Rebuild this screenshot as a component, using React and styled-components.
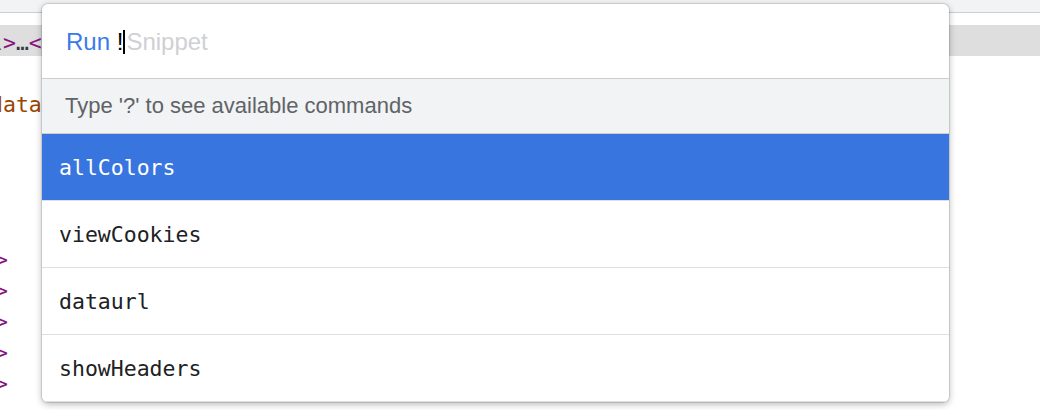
import React from "react";
import styled, { createGlobalStyle } from "styled-components";

const GlobalStyle = createGlobalStyle`
  html, body {
    margin: 0;
    padding: 0;
    background: #fff;
    overflow: hidden;
  }
  body {
    font-family: "Liberation Sans", Arial, sans-serif;
  }
`;

const Page = styled.div`
  position: relative;
  width: 1040px;
  height: 410px;
  overflow: hidden;
  background: #fff;
`;

const TopStrip = styled.div`
  height: 12px;
  background: #f1f3f4;
  border-bottom: 1px solid #cbcdd1;
`;

const CodeArea = styled.div`
  padding-top: 12px;
  font-family: "DejaVu Sans Mono", "Liberation Mono", monospace;
  font-size: 21.5px;
`;

const CodeLine = styled.div`
  box-sizing: border-box;
  height: 31px;
  padding-top: 5px;
  line-height: 26px;
  white-space: pre;
  overflow: hidden;
  text-indent: ${(p) => p.$indent || 0}px;
  background: ${(p) => (p.$selected ? "#dedede" : "transparent")};
`;

const Tag = styled.span`
  color: #881280;
`;

const Attr = styled.span`
  color: #994500;
`;

const Ellipsis = styled.span`
  color: #303942;
`;

const Dialog = styled.div`
  position: absolute;
  top: 4px;
  left: 42px;
  width: 907px;
  background: #fff;
  border-radius: 6px;
  overflow: hidden;
  box-shadow: 0 0 0 1px rgba(0, 0, 0, 0.1), 0 2px 7px rgba(0, 0, 0, 0.3);
`;

const InputRow = styled.div`
  box-sizing: border-box;
  height: 75px;
  display: flex;
  align-items: center;
  padding: 2px 0 0 24px;
  border-bottom: 1px solid #cdcdd1;
  font-size: 24px;
  white-space: pre;
`;

const Prompt = styled.span`
  color: #3b7ae8;
`;

const Typed = styled.span`
  color: #000;
`;

const Caret = styled.span`
  display: inline-block;
  width: 2px;
  height: 24px;
  background: #000;
  margin-right: 1px;
`;

const Placeholder = styled.span`
  color: #cfd0d4;
`;

const Hint = styled.div`
  box-sizing: border-box;
  height: 55px;
  display: flex;
  align-items: center;
  padding-left: 23px;
  background: #f1f3f4;
  border-bottom: 1px solid #cdcdd1;
  color: #5f6368;
  font-size: 22px;
`;

const List = styled.div`
  display: flex;
  flex-direction: column;
`;

const Item = styled.div`
  height: 66px;
  display: flex;
  align-items: center;
  padding-left: 17px;
  border-bottom: 1px solid #e0e0e0;
  font-family: "DejaVu Sans Mono", "Liberation Mono", monospace;
  font-size: 21.5px;
  color: ${(p) => (p.$selected ? "#fff" : "#202124")};
  background: ${(p) => (p.$selected ? "#3875de" : "#fff")};
`;

const commands = ["allColors", "viewCookies", "dataurl", "showHeaders"];

const App = () => {
  return (
    <Page>
      <GlobalStyle />
      <TopStrip />
      <CodeArea>
        <CodeLine $selected $indent={-10}>
          <Attr>l</Attr>
          <Tag>&gt;</Tag>
          <Ellipsis>…</Ellipsis>
          <Tag>&lt;</Tag>
        </CodeLine>
        <CodeLine />
        <CodeLine $indent={-10}>
          <Attr>data</Attr>
        </CodeLine>
        <CodeLine />
        <CodeLine />
        <CodeLine />
        <CodeLine />
        {[0, 1, 2, 3, 4].map((i) => (
          <CodeLine key={i} $indent={-5}>
            <Tag>&gt;</Tag>
          </CodeLine>
        ))}
      </CodeArea>

      <Dialog>
        <InputRow>
          <Prompt>Run </Prompt>
          <Typed>!</Typed>
          <Caret />
          <Placeholder>Snippet</Placeholder>
        </InputRow>
        <Hint>Type '?' to see available commands</Hint>
        <List>
          {commands.map((c, i) => (
            <Item key={c} $selected={i === 0}>
              {c}
            </Item>
          ))}
        </List>
      </Dialog>
    </Page>
  );
};

export default App;
